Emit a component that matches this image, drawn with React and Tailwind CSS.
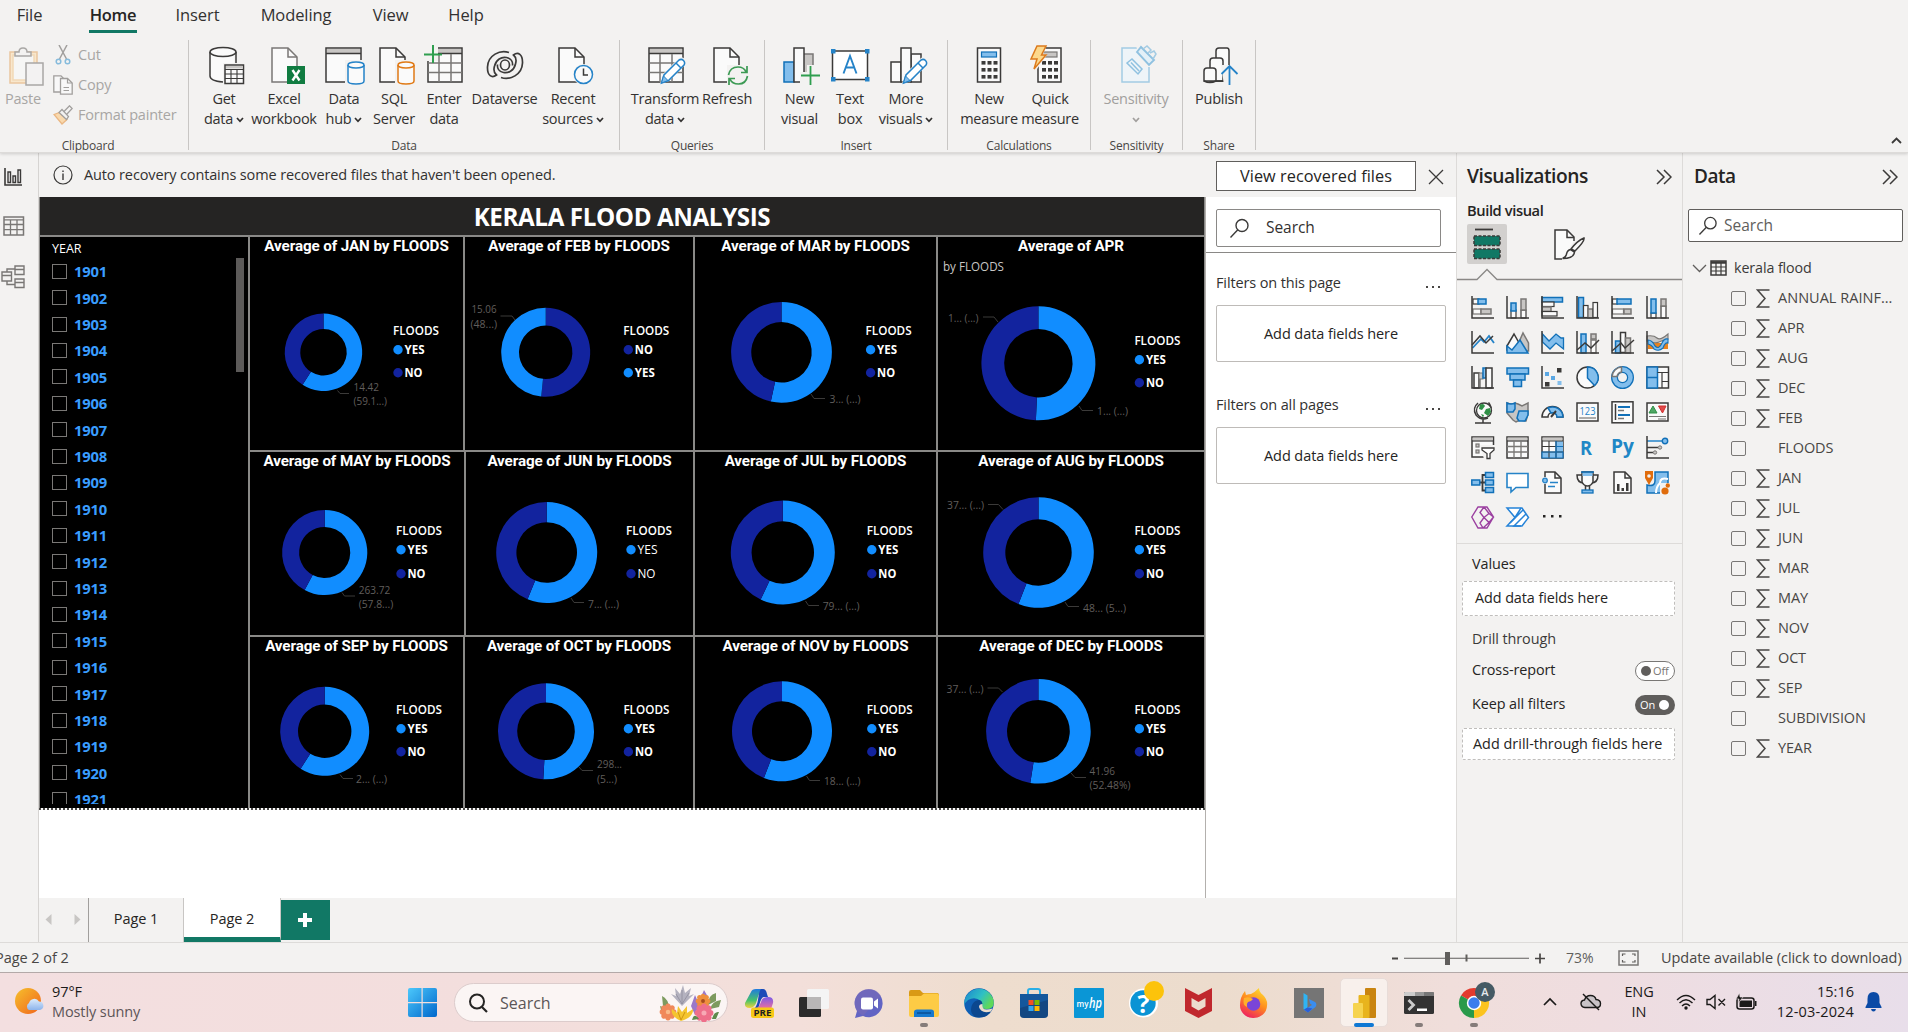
import React from "react";

const INK = "#3b3a39";
const BLUE = "#1170b8";
const SKY = "#83beec";
const GREY = "#c8c6c4";
const MID = "#797775";
const PAPER = "#fafafa";

function Icon({ w, h, className = "", children }) {
  return (
    <svg width={w} height={h} viewBox={`0 0 ${w} ${h}`} fill="none" className={`block shrink-0 ${className}`}>
      {children}
    </svg>
  );
}

function Box({ x, y, w, h, f = "none", s = INK, sw = 1.5, rx }) {
  return <rect x={x} y={y} width={w} height={h} fill={f} stroke={s} strokeWidth={sw} rx={rx} />;
}

function Line({ d, s = INK, f = "none", sw = 1.5, ...rest }) {
  return <path d={d} stroke={s} fill={f} strokeWidth={sw} {...rest} />;
}

/* ---------- ribbon icons ---------- */

const Page = ({ x = 0, s = INK }) => (
  <>
    <Line d={`M${x + 1} 3H${x + 17}L${x + 26} 12V37H${x + 1}Z`} s={s} f={PAPER} />
    <Line d={`M${x + 17} 3V12H${x + 26}`} s={s} />
  </>
);

const Pencil = () => (
  <g>
    <path d="M12 39 15 29 31 13Q34 11 37 14 39 17 37 20L21 36Z" fill="#f3f2f1" />
    <Line d="M13.5 38 16 30 31 15Q33.500 13.500 35.500 15.500 37.500 17.500 36 20L20.500 35.500Z" s="#2583c8" f="#fff" />
    <path d="M13.500 38 15.500 31 20 35.500Z" fill={SKY} stroke="#2583c8" />
    <Line d="M28 18 33 23" s="#2583c8" />
  </g>
);

const Cylinder = ({ s }) => (
  <g>
    <rect x="20" y="15" width="20" height="25" fill="#f3f2f1" />
    <Line d="M23 20V36Q23 39 31 39T39 36V20" s={s} f={PAPER} />
    <ellipse cx="31" cy="20" rx="8" ry="3" fill={PAPER} stroke={s} strokeWidth="1.5" />
  </g>
);

const GridTable = () => (
  <g>
    <Box x={1} y={3} w={34} h={34} f={PAPER} />
    <rect x="2" y="4" width="32" height="4" fill={GREY} />
    <Line d="M1 8.500H35" />
    <Line d="M1 18H35M1 27.500H35M12 9V37M24 9V37" s={MID} />
  </g>
);

const PasteIcon = () => (
  <Icon w={35} h={40} className="opacity-70">
    <Box x={1} y={6} w={27} h={31} f="#fbe3bd" s="#e8b57e" />
    <Box x={4} y={9} w={21} h={25} f="#f8f8f8" s="#f2cf9f" />
    <Line d="M6 10V6H10Q10 2 14 2T18 6H22V10Z" f="#f3f2f1" s="#8a8886" />
    <Box x={17} y={17} w={17} h={22} f="#f3f3f3" s="#8a8886" />
  </Icon>
);
const CutIcon = () => (
  <Icon w={20} h={20}>
    <Line d="M6 0 13.500 14M14 0 6.500 14" s="#a19f9d" />
    <circle cx="5.500" cy="16.500" r="2.300" stroke="#86bbdc" strokeWidth="1.500" />
    <circle cx="14.500" cy="16.500" r="2.300" stroke="#86bbdc" strokeWidth="1.500" />
  </Icon>
);
const CopyIcon = () => (
  <Icon w={20} h={20}>
    <Line d="M7 17H.8V.8H8L12 5" s="#a19f9d" f="#f8f8f8" sw={1.3} />
    <Line d="M7.500 3.500H14.500L19.200 8V19.200H7.500Z" s="#a19f9d" f="#f8f8f8" sw={1.3} />
    <Line d="M14.500 3.500V8H19M10.500 12.500H16M10.500 15.500H16" s="#a19f9d" sw={1.2} />
  </Icon>
);
const PainterIcon = () => (
  <Icon w={20} h={20}>
    <Line d="M1 9.500 6.500 7.500 14 14.500 9 19Z" f="#f9d9ad" s="#eab783" sw={1.3} />
    <Line d="M6 7.500 9 4.500 15.500 11.500 13.500 14.500ZM11 6.500 16.500.8 19.200 3.500 14 9" f="#f3f2f1" s="#a19f9d" sw={1.3} />
  </Icon>
);
const GetDataIcon = () => (
  <Icon w={36} h={40}>
    <Line d="M1 6V32Q1 37 14 37.500V37H25V6" f={PAPER} s="none" />
    <Line d="M14 37Q1 36 1 31V7M27 7V20" />
    <ellipse cx="14" cy="7" rx="13" ry="4.500" fill={PAPER} stroke={INK} strokeWidth="1.500" />
    <rect x="14" y="18" width="22" height="22" fill="#f3f2f1" />
    <Box x={16} y={20} w={18.500} h={18.500} f={PAPER} />
    <rect x="17" y="21" width="17" height="2.500" fill={GREY} />
    <Line d="M16 24.500H34M16 29H34M16 33.500H34M22 24V38M28 24V38" sw={1.1} />
  </Icon>
);
const ExcelIcon = () => (
  <Icon w={34} h={40}>
    <Page s={MID} />
    <rect x="16" y="21" width="18" height="18" fill="#107c41" />
    <Line d="M21.500 25 28.500 35.500M28.500 25 21.500 35.500" s="#fff" sw={2.4} />
  </Icon>
);
const DataHubIcon = () => (
  <Icon w={40} h={40}>
    <Box x={1} y={3} w={35} h={34} f={PAPER} />
    <rect x="2" y="4" width="33" height="4" fill={GREY} />
    <Line d="M1 8.500H36" />
    <Cylinder s="#2583c8" />
  </Icon>
);
const SqlIcon = () => (
  <Icon w={36} h={40}>
    <Page />
    <g transform="translate(-4 0)"><Cylinder s="#e07a16" /></g>
  </Icon>
);
const EnterDataIcon = () => (
  <Icon w={40} h={40}>
    <g transform="translate(3 0)"><GridTable /></g>
    <path d="M0 0H14V16H0Z" fill="#f3f2f1" />
    <Line d="M9 0V18M0 9.500H18" s="#2f9e4f" sw={2} />
  </Icon>
);
const Swirl = () => (
  <path d="M23 2.500C14-.5 2 5 1.500 17 1.200 26 6 28.500 10.500 25 8 23 7.500 19.500 8.500 16 10 9.500 15.500 6.500 20.500 7.500 25 8.500 27 12 26.500 15.500" />
);
const DataverseIcon = () => (
  <Icon w={38} h={30}>
    <g stroke={INK} strokeWidth="1.700">
      <Swirl />
      <g transform="rotate(180 19 15)"><Swirl /></g>
      <ellipse cx="19" cy="15" rx="4.500" ry="5" fill="#f3f2f1" />
    </g>
  </Icon>
);
const RecentIcon = () => (
  <Icon w={36} h={40}>
    <Page />
    <circle cx="25.500" cy="29.500" r="10.500" fill="#f3f2f1" />
    <circle cx="25.500" cy="29.500" r="9" fill={PAPER} stroke="#2583c8" strokeWidth="1.500" />
    <Line d="M25.500 23.500V30H30" />
  </Icon>
);
const TransformIcon = () => <Icon w={38} h={40}><GridTable /><Pencil /></Icon>;
const RefreshIcon = () => (
  <Icon w={36} h={40}>
    <Page />
    <path d="M14 20H36V40H14Z" fill="#f3f2f1" />
    <Line d="M15.500 30Q17 22 25 22 31 22 33 27M34 21V27.500H28M34.500 31Q33 39 25.500 39 19 39 17 34M16 40V33.500H22" s="#3c9a54" sw={1.7} />
  </Icon>
);
const NewVisualIcon = () => (
  <Icon w={38} h={40}>
    <Box x={1} y={17} w={10} h={20} f={SKY} s={BLUE} />
    <Box x={20} y={9} w={10} h={28} f={GREY} s={MID} />
    <Box x={11} y={3} w={10} h={34} f={PAPER} />
    <path d="M17 27H38V40H17ZM24 20H31V40H24Z" fill="#f3f2f1" />
    <Line d="M27.500 21V40M18 30.500H37" s="#2f9e4f" sw={1.800} />
  </Icon>
);
const TextBoxIcon = () => (
  <Icon w={40} h={40}>
    <Box x={2.500} y={6} w={35} h={28.500} f="#fff" />
    {[[1, 4], [35, 4], [1, 32], [35, 32]].map(([x, y]) => <rect key={`${x}-${y}`} x={x} y={y} width="4.500" height="4.500" fill="#2583c8" />)}
    <Line d="M13.500 28.500 20 11 26.500 28.500M16 22.500H24" s="#2583c8" sw={1.900} />
  </Icon>
);
const MoreVisualsIcon = () => (
  <Icon w={38} h={40}>
    <Box x={1} y={17} w={10} h={20} f={PAPER} />
    <Box x={21} y={9} w={10} h={28} f={PAPER} />
    <Box x={11} y={3} w={10} h={34} f={PAPER} />
    <Pencil />
  </Icon>
);
const CalcBody = ({ x, screen, edge }) => (
  <g>
    <Box x={x} y={3} w={23} h={34} f={PAPER} />
    <Box x={x + 4} y={7} w={15} h={5} f={screen} s={edge} sw={1.2} />
    {[16, 23, 30].map((y) => [4, 10, 16].map((c) => <rect key={`${y}-${c}`} x={x + c} y={y} width="4" height="3.600" fill={INK} />))}
  </g>
);
const NewMeasureIcon = () => <Icon w={26} h={40}><CalcBody x={1.500} screen={SKY} edge={BLUE} /></Icon>;
const QuickMeasureIcon = () => (
  <Icon w={36} h={40}>
    <CalcBody x={9} screen={GREY} edge={MID} />
    <path d="M0 0H18L14 9 18 10 8 24 0 26Z" fill="#f3f2f1" />
    <Line d="M8 1H17L12.500 10H17L5 24 8 14H2Z" f="#fcd88c" s="#dc7a1c" />
  </Icon>
);
const SensitivityIcon = () => (
  <Icon w={36} h={40}>
    <Box x={1} y={3} w={27} h={34} f="#eef4f8" s="#a3cbe3" />
    <path d="M15 0H36V22H20Z" fill="#f3f2f1" />
    <Line d="M6 18 11 14 21 24 17 29ZM10 17.500 18 26" s="#8fc1e0" />
    <Line d="M16 7 20 2 33 15 28 20Z" s="#8fc1e0" f="#e3f0f8" sw={1.900} />
    <Line d="M22 4 26 1 30 5 27 8M29 8 33 6 35 9 32 14" s="#a3cbe3" />
  </Icon>
);
const PublishIcon = () => (
  <Icon w={36} h={40}>
    <Line d="M13 36V6Q13 3 16 3H24Q26 3 26 6V36Z" f={PAPER} />
    <Line d="M7 36V16Q7 13 10 13H17Q20 13 20 16V36Z" f={PAPER} />
    <Line d="M1 36V26Q1 23 4 23H10Q13 23 13 26V36Z" f={PAPER} />
    <Line d="M1 36Q7 39 13 36H23" />
    <path d="M18 20H34V40H21Z" fill="#f3f2f1" />
    <Line d="M26.500 40V21M18.500 29 26.500 21 34.500 29" s="#2583c8" sw={1.800} />
  </Icon>
);

const Chevron = ({ className = "" }) => (
  <Icon w={8} h={6} className={className}>
    <path d="M1 1 4 4.300 7 1" stroke="currentColor" strokeWidth="1.700" />
  </Icon>
);

const ribbon = [
  {
    label: "Data", width: "w-[431px]", pad: "pl-[5px]",
    items: [
      { icon: GetDataIcon, w: "w-[60px]", a: "Get", b: "data", drop: true, dx: "ml-[6px]" },
      { icon: ExcelIcon, w: "w-[60px]", a: "Excel", b: "workbook", dx: "ml-[7px]" },
      { icon: DataHubIcon, w: "w-[60px]", a: "Data", b: "hub", drop: true, dx: "ml-[2px]" },
      { icon: SqlIcon, w: "w-[40px]", a: "SQL", b: "Server", dx: "ml-[6px]" },
      { icon: EnterDataIcon, w: "w-[60px]", a: "Enter", b: "data", dx: "mr-[1px]" },
      { icon: DataverseIcon, w: "w-[61px]", a: "Dataverse", dx: "" },
      { icon: RecentIcon, w: "w-[76px]", a: "Recent", b: "sources", drop: true, dx: "ml-[6px]" },
    ],
  },
  {
    label: "Queries", width: "w-[145px]", pad: "pl-[12px]",
    items: [
      { icon: TransformIcon, w: "w-[66px]", a: "Transform", b: "data", drop: true, dx: "ml-[3px]" },
      { icon: RefreshIcon, w: "w-[58px]", a: "Refresh", dx: "ml-[8px]" },
    ],
  },
  {
    label: "Insert", width: "w-[183px]", pad: "pl-[10px]",
    items: [
      { icon: NewVisualIcon, w: "w-[49px]", a: "New", b: "visual", dx: "ml-[4px]" },
      { icon: TextBoxIcon, w: "w-[52px]", a: "Text", b: "box", dx: "" },
      { icon: MoreVisualsIcon, w: "w-[60px]", a: "More", b: "visuals", drop: true, dx: "ml-[5px]" },
    ],
  },
  {
    label: "Calculations", width: "w-[143px]", pad: "pl-[9px]",
    items: [
      { icon: NewMeasureIcon, w: "w-[64px]", a: "New", b: "measure", dx: "" },
      { icon: QuickMeasureIcon, w: "w-[58px]", a: "Quick", b: "measure", dx: "mr-[6px]" },
    ],
  },
  {
    label: "Sensitivity", width: "w-[92px]", pad: "pl-[10px]",
    items: [{ icon: SensitivityIcon, w: "w-[70px]", a: "Sensitivity", b: "", drop: true, off: true, dx: "ml-[6px]" }],
  },
  {
    label: "Share", width: "w-[73px]", pad: "pl-[1px]",
    items: [{ icon: PublishIcon, w: "w-[70px]", a: "Publish", dx: "ml-[4px]" }],
  },
];

const tabs = [
  ["File", "ml-[16px] w-[27px]"],
  ["Home", "ml-[46px] w-[48px]"],
  ["Insert", "ml-[39px] w-[43px]"],
  ["Modeling", "ml-[41px] w-[72px]"],
  ["View", "ml-[40px] w-[37px]"],
  ["Help", "ml-[39px] w-[36px]"],
];

function Ribbon() {
  return (
    <header className="flex h-[153px] flex-col border-b border-[#dddbd9] bg-[#f3f2f1] shadow-[0_1px_3px_rgba(0,0,0,0.16)]">
      <nav className="flex h-[33px] shrink-0">
        {tabs.map(([name, cls]) => (
          <span
            key={name}
            className={`flex h-[33px] items-center justify-center whitespace-nowrap text-[16.5px] ${cls} ${
              name === "Home" ? "border-b-[3px] border-[#117865] font-semibold tracking-[-0.3px] text-[#252423]" : "pb-[3px] tracking-[-0.1px] text-[#323130]"
            }`}
          >
            {name}
          </span>
        ))}
      </nav>
      <div className="flex pt-[7px]">
        <section className="flex h-[110px] w-[189px] flex-col border-r border-[#c8c6c4] text-[14.5px] tracking-[-0.2px] text-[#a8a6a4]">
          <div className="flex h-[97px] shrink-0">
            <div className="flex w-[46px] flex-col items-center pt-[6px]">
              <div className="ml-[6px]"><PasteIcon /></div>
              <span className="mt-[3px] leading-[20px]">Paste</span>
            </div>
            <div className="flex flex-col pl-[7px]">
              <div className="flex h-[30px] items-center gap-[5px]"><CutIcon />Cut</div>
              <div className="flex h-[30px] items-center gap-[5px]"><CopyIcon />Copy</div>
              <div className="flex h-[30px] items-center gap-[5px] whitespace-nowrap"><PainterIcon />Format painter</div>
            </div>
          </div>
          <span className="w-[176px] text-center text-[12px] leading-[17px] text-[#484644]">Clipboard</span>
        </section>
        {ribbon.map((g) => (
          <section key={g.label} className={`flex h-[110px] flex-col border-r border-[#c8c6c4] ${g.width}`}>
            <div className={`flex h-[97px] shrink-0 ${g.pad}`}>
              {g.items.map((it) => (
                <div
                  key={it.a}
                  className={`flex shrink-0 flex-col items-center text-[14.5px] leading-[20px] tracking-[-0.25px] ${it.w} ${it.off ? "text-[#a19f9d]" : "text-[#323130]"}`}
                >
                  <div className={`flex h-[44px] items-center pt-[5px] ${it.dx}`}><it.icon /></div>
                  <span className="mt-[5px] whitespace-nowrap">{it.a}</span>
                  <span className="flex h-[20px] items-center whitespace-nowrap">
                    {it.b}
                    {it.drop && <Chevron className={it.b ? "mt-[2px] ml-[3px]" : "mt-[2px]"} />}
                  </span>
                </div>
              ))}
            </div>
            <span className="text-center text-[12px] leading-[17px] tracking-[-0.2px] text-[#484644]">{g.label}</span>
          </section>
        ))}
        <div className="flex flex-1 items-end justify-end pr-[6px] pb-[6px]">
          <Icon w={11} h={7}><Line d="M1 6 5.500 1.500 10 6" sw={1.800} /></Icon>
        </div>
      </div>
    </header>
  );
}

/* ---------- left rail ---------- */

function Rail() {
  return (
    <aside className="flex w-[39px] shrink-0 flex-col border-r border-[#d6d4d2] pt-[15px]">
      <Icon w={18} h={18} className="ml-[4px]">
        <Line d="M1 0V17H18" sw={1.600} />
        <Line d="M4 14.500V4H6.500V14.500ZM9 14.500V8H11.500V14.500ZM14 14.500V2H16.500V14.500Z" sw={1.400} />
      </Icon>
      <Icon w={22} h={21} className="mt-[30px] ml-[3px]">
        <Box x={1} y={1} w={19.500} h={18} s={MID} />
        <Line d="M1 3.800H20M1 8.500H20M1 13.700H20M7.500 4V19M14 4V19" s={MID} sw={1.300} />
      </Icon>
      <Icon w={24} h={24} className="mt-[28px] ml-[1px]">
        <Line d="M1 7H10.500V16H1ZM1 10.500H10.500M14 1H23V9.500H14ZM14 4.500H23M14 14H23V22.500H14ZM14 17.500H23M6 7V4H14M6 16V19.500H14" s={MID} sw={1.400} />
      </Icon>
    </aside>
  );
}

/* ---------- report canvas ---------- */

const YES = "#118dff";
const NO = "#12239e";

const charts = [
  [
    { m: "JAN", vb: [250, 237, 213, 213], w: "w-[215px]", cx: 323.5, cy: 352.3, r: 38.7, p: 0.591, lx: 393, ly: 330.7, gap: [19, 42],
      labels: [[353.5, 390.500, "14.42", 25.5], [353.5, 404.500, "(59.1...)", 33.500]], leads: ["M337.500 390.500 340 393.500H349"] },
    { m: "FEB", vb: [465, 237, 229, 213], w: "w-[230px]", cx: 545.7, cy: 352.3, r: 44.5, p: 0.516, swap: true, lx: 623.3, ly: 330.7, gap: [19, 42],
      labels: [[471.500, 313, "15.06", 25], [470.500, 328, "(48...)", 26.500]], leads: ["M500.500 316H512L515 320"] },
    { m: "MAR", vb: [695, 237, 241, 213], w: "w-[243px]", cx: 781.5, cy: 352.3, r: 50.4, p: 0.534, lx: 865.6, ly: 330.7, gap: [19, 42],
      labels: [[829.500, 403, "3... (...)", 31]], leads: ["M811 394 814 398.500H825"] },
    { m: "APR", vb: [938, 237, 266, 213], w: "flex-1", cx: 1038.4, cy: 363.3, r: 57, p: 0.507, lx: 1134.4, ly: 340.7, gap: [19, 42],
      labels: [[948, 322, "1... (...)", 30.500], [1097, 415, "1... (...)", 31]], leads: ["M983 317H994L998 322", "M1079 406 1082 410.500H1093"] },
  ],
  [
    { m: "MAY", vb: [250, 452, 214, 183], w: "w-[216px]", cx: 324.7, cy: 552.5, r: 42.6, p: 0.578, lx: 396, ly: 530.7, gap: [19, 43],
      labels: [[358.700, 594, "263.72", 31.500], [358.700, 608, "(57.8...)", 34.500]], leads: ["M342 592.500 344.500 596H355"] },
    { m: "JUN", vb: [466, 452, 227, 183], w: "w-[229px]", cx: 546.7, cy: 552.5, r: 50.5, p: 0.562, thin: true, lx: 626, ly: 530.7, gap: [19, 43],
      labels: [[588, 607.500, "7... (...)", 31]], leads: ["M571 598 574 602.500H584"] },
    { m: "JUL", vb: [695, 452, 241, 183], w: "w-[243px]", cx: 782.8, cy: 552.5, r: 52, p: 0.57, lx: 866.8, ly: 530.7, gap: [19, 43],
      labels: [[822.700, 610, "79... (...)", 37]], leads: ["M805.500 601 808.500 605.500H819"] },
    { m: "AUG", vb: [938, 452, 266, 183], w: "flex-1", cx: 1038.5, cy: 552.5, r: 55.3, p: 0.559, lx: 1134.400, ly: 530.7, gap: [19, 43],
      labels: [[947, 509, "37... (...)", 37], [1083, 612, "48... (5...)", 43]], leads: ["M988 504.500H998.500L1003 509.500", "M1065 602 1068 606.500H1079"] },
  ],
  [
    { m: "SEP", vb: [250, 637, 214, 169], w: "w-[215px]", cx: 324.7, cy: 731.3, r: 44.5, p: 0.591, lx: 396, ly: 709.7, gap: [19, 42],
      labels: [[356, 783, "2... (...)", 31]], leads: ["M340 774.500 343 778.500H353"] },
    { m: "OCT", vb: [465, 637, 229, 169], w: "w-[230px]", cx: 546, cy: 731.3, r: 48, p: 0.509, lx: 623.4, ly: 709.7, gap: [19, 42],
      labels: [[597, 768, "298...", 25], [597, 783, "(5...)", 20]], leads: ["M579 767 582 770.500H593"] },
    { m: "NOV", vb: [695, 637, 241, 169], w: "w-[243px]", cx: 782, cy: 731.3, r: 50, p: 0.559, lx: 866.8, ly: 709.7, gap: [19, 42],
      labels: [[824, 785, "18... (...)", 36.500]], leads: ["M806.500 776 809.500 780.500H820"] },
    { m: "DEC", vb: [938, 637, 266, 169], w: "flex-1", cx: 1038.4, cy: 731.3, r: 52.3, p: 0.5248, lx: 1134.400, ly: 709.7, gap: [19, 42],
      labels: [[946.500, 693, "37... (...)", 37], [1089.500, 775, "41.96", 25.500], [1089.500, 789, "(52.48%)", 41]], leads: ["M987.500 688H998.500L1002.500 692", "M1071 773 1075 777.500H1086"] },
  ],
];

function Donut({ cx, cy, r, p, first, second }) {
  const hole = r * 0.6;
  const a = p * Math.PI * 2;
  const pt = (rad, ang) => `${cx + rad * Math.sin(ang)} ${cy - rad * Math.cos(ang)}`;
  const arc = (a0, a1) => {
    const big = a1 - a0 > Math.PI ? 1 : 0;
    return `M${pt(r, a0)}A${r} ${r} 0 ${big} 1 ${pt(r, a1)}L${pt(hole, a1)}A${hole} ${hole} 0 ${big} 0 ${pt(hole, a0)}Z`;
  };
  return (
    <>
      <path d={arc(0, a)} fill={first} />
      <path d={arc(a, Math.PI * 2)} fill={second} />
    </>
  );
}

function ChartCard({ c, last }) {
  const first = c.swap ? ["NO", NO] : ["YES", YES];
  const second = c.swap ? ["YES", YES] : ["NO", NO];
  const [x, y, w, h] = c.vb;
  const top = 18;
  return (
    <article className={`flex flex-col overflow-hidden ${c.w} ${last ? "" : "border-r-2 border-[#8a8987]"}`}>
      <h2 className={`h-[18px] whitespace-nowrap text-center font-[Roboto] text-[15.200px] leading-[19px] font-bold text-white ${c.m === "APR" ? "tracking-[-0.100px]" : "tracking-[-0.100px]"}`}>
        Average of {c.m}{c.m === "APR" ? "" : " by FLOODS"}
      </h2>
      <svg width={w} height={h - top} viewBox={`${x} ${y + top} ${w} ${h - top}`} className="block font-['Open_Sans',sans-serif]">
        {c.m === "APR" && <text x="943" y="271" fontSize="12.500" fill="#c8c6c4" textLength="61" lengthAdjust="spacingAndGlyphs">by FLOODS</text>}
        <Donut cx={c.cx} cy={c.cy} r={c.r} p={c.p} first={first[1]} second={second[1]} />
        {c.leads.map((d) => <path key={d} d={d} fill="none" stroke="#3b3a39" />)}
        {c.labels.map(([lx, ly, t, len]) => (
          <text key={`${lx}${ly}`} x={lx} y={ly} fontSize="11.500" fill="#605e5c" textLength={len} lengthAdjust="spacingAndGlyphs">{t}</text>
        ))}
        <text x={c.lx} y={c.ly + 4.300} fontSize="12" fontWeight="600" fill="#fff" textLength="46" lengthAdjust="spacingAndGlyphs">FLOODS</text>
        {[first, second].map(([name, col], i) => (
          <g key={name}>
            <circle cx={c.lx + 5} cy={c.ly + c.gap[i]} r="4.700" fill={col} />
            <text x={c.lx + 11.500} y={c.ly + c.gap[i] + 4.600} fontSize="12" fontWeight={c.thin ? 400 : 700} fill="#fff" textLength={name === "YES" ? 20 : 18} lengthAdjust="spacingAndGlyphs">{name}</text>
          </g>
        ))}
      </svg>
    </article>
  );
}

const years = Array.from({ length: 21 }, (_, i) => 1901 + i);

function Slicer() {
  return (
    <div className="flex w-[210px] flex-col border-r-2 border-[#8a8987] pl-[12px]">
      <span className="mt-[3px] text-[12.500px] leading-[17px] font-medium text-white">YEAR</span>
      <div className="flex h-[547px]">
        <ul className="flex h-[547px] flex-1 flex-col overflow-hidden pt-[1px]">
          {years.map((yr) => (
            <li key={yr} className="flex h-[26.420px] shrink-0 items-center">
              <span className="size-[15px] border border-[#7a7876]" />
              <span className="ml-[7px] text-[14.800px] font-bold tracking-[-0.200px] text-[#3a9dff]">{yr}</span>
            </li>
          ))}
        </ul>
        <div className="mt-[1px] mr-[4px] h-[114px] w-[8px] bg-[#5c5a59]" />
      </div>
    </div>
  );
}

function Report() {
  return (
    <div className="flex min-h-0 flex-1 flex-col bg-white">
      <div className="flex h-[611px] shrink-0 flex-col border-r border-l border-[#8a8987] bg-black">
        <h1 className="flex h-[38px] shrink-0 items-center justify-center bg-[#252423] pt-[3px] text-[24.200px] font-bold tracking-[-0.400px] text-white">
          KERALA FLOOD ANALYSIS
        </h1>
        <div className="flex min-h-0 flex-1 border-t-2 border-[#8a8987]">
          <Slicer />
          <div className="flex flex-1 flex-col">
            {charts.map((row, i) => (
              <div key={row[0].m} className={["flex h-[215px] border-b-2 border-[#8a8987]", "flex h-[185px] border-b-2 border-[#8a8987]", "flex flex-1"][i]}>
                {row.map((c, j) => <ChartCard key={c.m} c={c} last={j === 3} />)}
              </div>
            ))}
          </div>
        </div>
      </div>
      <div className="h-[2px] bg-[repeating-linear-gradient(90deg,#4b4a48_0_2px,#fff_2px_4px)]" />
    </div>
  );
}

/* ---------- panes ---------- */

const SearchGlyph = ({ size = 21 }) => (
  <svg width={size} height={size} viewBox="0 0 21 21" fill="none" className="block shrink-0">
    <circle cx="13" cy="7.500" r="6" stroke={INK} strokeWidth="1.400" />
    <path d="M8.800 11.800 1.500 19.500" stroke={INK} strokeWidth="1.400" />
  </svg>
);

const DoubleChevron = () => (
  <Icon w={16} h={16}><Line d="M1 1 8 8 1 15M8 1 15 8 8 15" sw={1.500} /></Icon>
);

function FilterGroup({ title }) {
  return (
    <section>
      <div className="flex h-[20px] w-[225px] items-center justify-between whitespace-nowrap text-[14.500px] tracking-[-0.130px] text-[#323130]">
        {title}
        <Icon w={16} h={4} className="mt-[7px]"><path d="M1 1h2v2H1zM7 1h2v2H7zM13 1h2v2h-2z" fill="#484644" /></Icon>
      </div>
      <div className="mt-[12px] flex h-[57px] w-[230px] items-center justify-center rounded-[2px] border border-[#bebbb8] text-[14.500px] tracking-[-0.080px] text-[#252423]">
        Add data fields here
      </div>
    </section>
  );
}

function Filters() {
  return (
    <aside className="flex w-[251px] shrink-0 flex-col border-l border-[#b3b0ad] bg-white">
      <div className="flex h-[56px] items-end border-b border-[#8a8886] pb-[5px] pl-[10px]">
        <div className="flex h-[38px] w-[225px] items-center gap-[16px] rounded-[2px] border border-[#8a8886] pl-[12px] text-[15.500px] tracking-[-0.050px] text-[#323130]">
          <SearchGlyph />Search
        </div>
      </div>
      <div className="flex flex-col gap-[33px] pt-[20px] pl-[10px]">
        <FilterGroup title="Filters on this page" />
        <FilterGroup title="Filters on all pages" />
      </div>
    </aside>
  );
}

const Axes = () => <Line d="M1 0V22H23" />;
const Sheet = () => <Box x={1} y={2} w={21} h={18} f={PAPER} />;

const vizIcons = [
  <><Box x={2} y={3} w={6} h={5} f={PAPER} sw={1.2} /><Box x={7} y={3} w={8} h={5} f={SKY} s={BLUE} /><Box x={2} y={13} w={8} h={5} f={PAPER} s={MID} sw={1.2} /><Box x={10} y={13} w={10} h={5} f={GREY} s={MID} /><Axes /></>,
  <><Box x={5} y={14} w={5} h={8} f={PAPER} sw={1.2} /><Box x={5} y={7} w={5} h={8} f={SKY} s={BLUE} /><Box x={15} y={14} w={5} h={8} f={PAPER} sw={1.2} /><Box x={15} y={3} w={5} h={11} f={GREY} s={MID} /><Axes /></>,
  <><Box x={1} y={1.5} w={20.500} h={4.500} f={SKY} s={BLUE} /><Box x={1} y={6} w={12} h={4.500} f={PAPER} sw={1.2} /><Box x={1} y={11} w={9} h={4.500} f={GREY} s={MID} /><Box x={1} y={15.500} w={15} h={4.500} f={PAPER} sw={1.2} /><Axes /></>,
  <><Box x={2.500} y={1.500} w={5} h={20} f={SKY} s={BLUE} /><Box x={7.500} y={9.500} w={4.500} h={12} f={PAPER} sw={1.2} /><Box x={12} y={13} w={5} h={9} f={GREY} s={MID} /><Box x={17} y={6.500} w={4.500} h={15} f={PAPER} sw={1.2} /><Axes /></>,
  <><Box x={1.500} y={3} w={5} h={5} f={PAPER} sw={1.2} /><Box x={6} y={3} w={14} h={5} f={SKY} s={BLUE} /><Box x={1.500} y={13} w={11} h={5} f={PAPER} s={MID} sw={1.2} /><Box x={13} y={13} w={7} h={5} f={GREY} s={MID} /><Axes /></>,
  <><Box x={5} y={17} w={5} h={5} f={PAPER} sw={1.2} /><Box x={5} y={3} w={5} h={14} f={SKY} s={BLUE} /><Box x={15} y={10} w={5} h={12} f={PAPER} sw={1.2} /><Box x={15} y={3} w={5} h={7} f={GREY} s={MID} /><Axes /></>,
  <><Line d="M1.500 17 10 8 13 11 18 5 23 12" s="#2583c8" sw={1.800} /><Line d="M1 14 9 5 15 12 22 5" /><Axes /></>,
  <><Line d="M9 20 17 2 22.500 12V20Z" s={MID} f={GREY} /><Line d="M1 15 8 3 17 19H1Z" f={PAPER} /><Line d="M1 22V15L6 19 14 9 22 22Z" s={BLUE} f={SKY} /></>,
  <><Line d="M1.500 3 8 10 15 3 20 7H22.500V18L15 12 9 18 1.500 11Z" s={BLUE} f={SKY} sw={1.300} /><Axes /></>,
  <><Box x={5} y={3} w={5} h={19} f={SKY} s={BLUE} /><Box x={15} y={3} w={5} h={5} f={GREY} s={MID} /><Box x={15} y={9} w={5} h={13} f={PAPER} s={MID} /><Line d="M1 19 9 12 15 17 23 9" /><Axes /></>,
  <><Box x={4.500} y={10} w={5} h={12} f={SKY} s={BLUE} /><Box x={9.500} y={1.500} w={5} h={20} f={PAPER} /><Box x={14.500} y={7} w={5} h={15} f={GREY} s={MID} /><Line d="M1 20 10 12 14 17 23 9" /><Axes /></>,
  <><path d="M2 12H22V18H2Z" fill="#e8821e" /><Line d="M1 5Q8 4 11 7T22 3V8Q17 9 13 11T1 10Z" f={GREY} s={MID} sw={1.100} /><Line d="M2 9Q6 9 9 15 13 19 16 12 18 7 22 8V12Q19 11 17 17 13 21 8 18 6 14 2 13Z" s={BLUE} f={SKY} sw={1.100} /><Axes /></>,
  <><Box x={3} y={7} w={5} h={15} f={PAPER} /><Box x={8} y={7} w={4} h={6} f={GREY} s={MID} sw={1} /><Box x={12} y={2} w={3} h={10} f={SKY} s={BLUE} /><Box x={15} y={2} w={6} h={20} f={PAPER} /><Line d="M9 13V22" s={MID} /><Axes /></>,
  <><Box x={1} y={2} w={21.500} h={6} f={SKY} s={BLUE} /><Box x={4} y={8} w={15} h={6} f={SKY} s={BLUE} /><Box x={7.500} y={14} w={8} h={6.500} f={SKY} s={BLUE} /></>,
  <><rect x="16" y="2" width="4.500" height="4.500" fill={INK} /><rect x="4" y="6" width="4" height="4" fill="#5aa7e3" /><rect x="10" y="10" width="4" height="4" fill="#5aa7e3" /><rect x="16.500" y="15" width="4" height="4" fill={SKY} /><rect x="4" y="16" width="4.500" height="4.500" fill={INK} /><Axes /></>,
  <><circle cx="11.500" cy="11.500" r="10.500" fill={PAPER} stroke={INK} strokeWidth="1.500" /><Line d="M11.500 1A10.500 10.500 0 0 1 18.500 19.500L11.500 12Z" s={BLUE} f={SKY} /></>,
  <><circle cx="11.500" cy="11.500" r="8" fill="none" stroke={BLUE} strokeWidth="7" /><circle cx="11.500" cy="11.500" r="8" fill="none" stroke={SKY} strokeWidth="4.500" /><Line d="M1 10.500A10.500 10.500 0 0 1 10.500 1V6A5.500 5.500 0 0 0 6 10.500Z" f={PAPER} s={MID} /></>,
  <><Box x={1} y={1} w={21.500} h={21} f={PAPER} /><Box x={1} y={1} w={10.500} h={21} f={SKY} s={BLUE} /><Line d="M1 11.500H11" s={BLUE} /><Line d="M11.500 6.500H22.500M16 6.500V22M16 15.500H22.500" sw={1.200} /></>,
  <><Line d="M7 2Q1 7 5 14 10 20 17 17M17.500 1.500Q21 6 20 10M12 18V22M4 22H20" /><circle cx="13" cy="9.500" r="7.500" fill={PAPER} stroke={INK} strokeWidth="1.300" /><path d="M9 3.500Q13 2 14 5L11 9 8 8ZM15 8 19 7 20 11 17 15 13 12ZM10 13 13 14 12 16.500Z" fill="#2f8f46" /></>,
  <><Line d="M1 2Q6 4 9 2L12 3 16 5 22 2V13L20 20 14 19 10 21 7 19 1 12Z" s={MID} f={GREY} /><Line d="M1 2Q5 4 9 2V8L7 11H1ZM13 10H22V14L19 20H13L11 17Z" s={BLUE} f={SKY} /></>,
  <><Line d="M1 16A10.500 10.500 0 0 1 22 16H16A4.500 4.500 0 0 0 7 16Z" f={PAPER} /><Line d="M7 7A10.500 10.500 0 0 1 22 16H16A4.500 4.500 0 0 0 10 12Z" s={BLUE} f={SKY} /><Line d="M10 16 15 10" sw={2} /></>,
  <><Sheet /><text x="3.500" y="13.500" fontSize="11" fill="#2583c8" textLength="16" lengthAdjust="spacingAndGlyphs">123</text><Line d="M3 17H20" s={MID} sw={1.200} /></>,
  <><Box x={1} y={.8} w={21} h={21} f={PAPER} /><Line d="M4.500 3V19" /><Line d="M7 6H19M7 14H19" s={BLUE} sw={2} /><Line d="M7 9.500H13M7 17.500H13" s={MID} sw={1.500} /></>,
  <><Sheet /><path d="M3 12 7 5 11 12Z" fill="#4fa765" stroke="#2f8f46" /><path d="M12.500 5H20L16.500 12Z" fill="#e04a4a" stroke="#d22f2f" /><Line d="M3 15.500H20M12 18H20" s={MID} sw={1.200} /></>,
  <><Box x={1} y={1} w={21.500} h={20} f={PAPER} /><rect x="1.500" y="1.500" width="20.500" height="3" fill={GREY} /><Line d="M1 5H22.500" sw={1.200} /><Box x={5} y={8} w={3} h={3} f={GREY} s={MID} sw={1.2} /><Box x={5} y={14} w={3} h={3} f={GREY} s={MID} sw={1.2} /><path d="M9 9H24V23H13Z" fill="#f3f2f1" /><Line d="M11 12H23V14L19 17.500V22.500H16V17.500L11 14Z" f="#fff" sw={1.300} /></>,
  <><Box x={1} y={1} w={21} h={21} f={PAPER} /><rect x="1.500" y="1.500" width="20" height="3" fill={GREY} /><Line d="M1 5H22" sw={1.200} /><Line d="M1 10.500H22M1 16H22M8 5V22M15 5V22" s={MID} sw={1.300} /></>,
  <><Box x={1} y={1} w={21} h={21} f={PAPER} /><rect x="1.500" y="1.500" width="20" height="3" fill={GREY} /><path d="M15 5H22V22H1V16H15Z" fill={SKY} /><Line d="M1 5H22M1 10.500H22M1 16H22M8 5V22M15 5V22" sw={1.100} /><Line d="M1 16H22V22H1ZM15 5V22M15 10.500H22" s={BLUE} sw={1.200} /></>,
  <text x="4" y="19" fontSize="20" fontWeight="700" fill="#1f87c6" textLength="12" lengthAdjust="spacingAndGlyphs">R</text>,
  <text x="0" y="17" fontSize="20" fontWeight="700" fill="#1f87c6" textLength="23" lengthAdjust="spacingAndGlyphs">Py</text>,
  <><Line d="M1 5H16" s="#2583c8" /><circle cx="19" cy="5" r="2.700" fill={SKY} stroke={BLUE} strokeWidth="1.400" /><Line d="M1 11.500H12M1 16.500H7" sw={1.300} /><circle cx="14" cy="11.500" r="1.700" fill={GREY} stroke={MID} /><circle cx="9" cy="16.500" r="1.700" fill={GREY} stroke={MID} /><Axes /></>,
  <><Line d="M8 11.500H15M15 4H11.500V19.500H15" sw={1.800} /><Box x={.8} y={9} w={8} h={5} f={SKY} s={BLUE} /><Box x={14.500} y={1.500} w={8} h={5} f={SKY} s={BLUE} /><Box x={14.500} y={9} w={8} h={5} f={SKY} s={BLUE} /><Box x={14.500} y={16.500} w={8} h={5} f={SKY} s={BLUE} /></>,
  <Line d="M1 2.500H22V16.500H10L5 21V16.500H1Z" s="#2583c8" f="#fff" sw={1.600} />,
  <><Line d="M4 1H14L20 7V22H4Z" f={PAPER} /><Line d="M14 1V7H20" /><rect x="2" y="6" width="4" height="7" fill="#f3f2f1" /><circle cx="4" cy="9.500" r="2.300" fill={SKY} stroke="#2583c8" strokeWidth="1.300" /><Line d="M9 11.500H17M7 15.500H14" s="#2583c8" sw={1.300} /></>,
  <><Line d="M6 4H1Q1 12 8 12M17 4H22Q22 12 15 12M9.500 15V19M13.500 15V19" f="none" /><Line d="M6 1H17V11Q15 15 11.500 15T6 11Z" f={PAPER} /><path d="M6.500 1.500H16.500V5H6.500Z" fill={SKY} /><Line d="M6 2V1H17V2" s={BLUE} /><Box x={6} y={19} w={11} h={3} f={SKY} s={BLUE} sw={1.3} /></>,
  <><Line d="M3 1H14L20 7V22H3Z" f={PAPER} /><Line d="M14 1V7H20" /><path d="M6 13H8.500V20H6ZM10.500 17H13V20H10.500ZM15 12H17.500V20H15Z" fill={INK} /></>,
  <><Line d="M9 1H22V12L14 22H1V14Q9 16 9 10Z" s={BLUE} f={SKY} /><Line d="M22 8Q14 6 14 12 10 16 10 22" s="#fff" sw={2} /><path d="M-1 0H7V7L3 14-1 7Z" fill="#e06c0c" /><circle cx="3" cy="5" r="1.800" fill="#f3f2f1" /><path d="M14 12H24V23H14Z" fill="#f3f2f1" /><circle cx="19" cy="20" r="3.600" fill="#e06c0c" /><circle cx="21.800" cy="14.500" r="2.200" fill="#e06c0c" /></>,
  <g stroke="#9b3fa0" strokeWidth="1.400"><path d="M13 1H7L.8 11 7 22H12L9 17 13 11.500 9 6.500ZM13 1H16L22.500 11 16 22H12M13 1 18 7.500 13 11.500 18 16.500 12 22M18 7.500 22.500 11 18 16.500" /></g>,
  <g stroke="#2583d8" strokeWidth="1.500" fill="#fff"><path d="M1 2H16L22.500 11.500 16 20H1L9 11.500Z" /><path d="M9 11.500 15 2M15 20H8L20 8M4 17 17 4" fill="none" /></g>,
  <path d="M2 9h2.500v2.500H2zM10 9h2.500v2.500H10zM18 9h2.500v2.500H18z" fill="#252423" />,
];

function Visualizations() {
  return (
    <aside className="flex w-[226px] shrink-0 flex-col border-l border-[#dddbd9] bg-[#f3f2f1] text-[#252423]">
      <div className="flex h-[47px] items-center justify-between pr-[10px] pl-[10px] text-[19.200px] font-semibold tracking-[-0.450px]">
        Visualizations<DoubleChevron />
      </div>
      <h3 className="pl-[10px] text-[14.700px] leading-[20px] font-semibold tracking-[-0.400px]">Build visual</h3>
      <div className="flex h-[46px] pt-[4px] pl-[10px]">
        <div className="flex h-[40px] w-[40px] items-center justify-center rounded-[2px] bg-[#d2d0ce]">
          <Icon w={32} h={32}>
            <Line d="M4 1.500H22" sw={1.800} />
            <rect x="3" y="8" width="26" height="9.500" fill="#117865" stroke={INK} strokeWidth="1.500" strokeDasharray="3 1.500" />
            <rect x="3" y="21" width="26" height="9.500" fill="#117865" stroke={INK} strokeWidth="1.500" strokeDasharray="3 1.500" />
          </Icon>
        </div>
        <Icon w={32} h={32} className="mt-[5px] ml-[47px]">
          <Line d="M8 30H1V1H13L20 8V12" f={PAPER} />
          <Line d="M13 1V8.500H20" />
          <Line d="M30 9Q31 12 21 22L17 20Q23 12 30 9ZM16.500 20.500 20.500 23Q20 29.500 8.500 29.500 12 28.500 12.500 25 13.500 21 16.500 20.500Z" f="#f8f8f8" />
        </Icon>
      </div>
      <Icon w={225} h={16}><Line d="M0 13.500H20L30 3.500 40 13.500H225" s="#8a8886" sw={1.300} /></Icon>
      <div className="grid h-[262px] grid-cols-[repeat(6,35px)] content-start gap-y-[12px] border-b border-[#dddbd9] pt-[14px] pl-[14px]">
        {vizIcons.map((g, i) => <svg key={i} width="23" height="23" viewBox="0 0 23 23" fill="none" className="block overflow-visible">{g}</svg>)}
      </div>
      <div className="flex flex-col pr-[7px] pl-[5px] text-[14.400px] tracking-[-0.080px]">
        <span className="mt-[10px] pl-[10px] leading-[20px]">Values</span>
        <div className="mt-[7px] flex h-[35px] items-center rounded-[2px] border border-dashed border-[#c0bebc] bg-white pb-[1px] pl-[12px]">Add data fields here</div>
        <span className="mt-[13px] pl-[10px] leading-[20px] font-medium text-[#3b3a39]">Drill through</span>
        <div className="mt-[12px] flex h-[20px] items-center justify-between pl-[10px]">
          <span className="mb-[2px]">Cross-report</span>
          <span className="flex h-[20px] w-[40px] items-center gap-[2px] rounded-full border border-[#797775] bg-white pl-[5px] text-[11px] text-[#797775]">
            <i className="size-[10px] rounded-full bg-[#605e5c]" />Off
          </span>
        </div>
        <div className="mt-[14px] flex h-[20px] items-center justify-between pl-[10px]">
          <span className="mb-[2px]">Keep all filters</span>
          <span className="flex h-[20px] w-[40px] items-center justify-between rounded-full bg-[#605e5c] pr-[6px] pl-[5px] text-[11px] text-white">
            On<i className="size-[10px] rounded-full bg-white" />
          </span>
        </div>
        <div className="mt-[13px] flex h-[32px] items-center whitespace-nowrap rounded-[2px] border border-dashed border-[#c0bebc] bg-white pb-[1px] pl-[10px] tracking-[0.020px]">Add drill-through fields here</div>
      </div>
    </aside>
  );
}

const fields = ["ANNUAL RAINF...", "APR", "AUG", "DEC", "FEB", "FLOODS", "JAN", "JUL", "JUN", "MAR", "MAY", "NOV", "OCT", "SEP", "SUBDIVISION", "YEAR"];

function DataPane() {
  return (
    <aside className="flex w-[226px] shrink-0 flex-col border-l border-[#dddbd9] bg-[#f3f2f1] text-[#252423]">
      <div className="flex h-[47px] items-center justify-between pr-[10px] pl-[11px] text-[19px] font-semibold tracking-[-0.450px]">
        Data<DoubleChevron />
      </div>
      <div className="mt-[9px] ml-[5px] flex h-[33px] w-[215px] items-center gap-[6px] rounded-[2px] border border-[#605e5c] bg-white pl-[9px] text-[15.500px] tracking-[0px] text-[#605e5c]">
        <SearchGlyph size={20} />Search
      </div>
      <div className="mt-[11px] flex h-[30px] items-center pl-[9px] text-[14.300px] tracking-[-0.100px] text-[#3b3a39]">
        <Icon w={15} h={9}><Line d="M1 1 7.500 7.500 14 1" s="#605e5c" sw={1.300} /></Icon>
        <Icon w={17} h={16} className="ml-[3px]">
          <Box x={1} y={1} w={15} h={14} />
          <Line d="M1 2.500H16" sw={2.500} />
          <Line d="M1 7H16M1 11H16M6 3V15M11 3V15" sw={1.200} />
        </Icon>
        <span className="ml-[7px]">kerala flood</span>
      </div>
      <ul>
        {fields.map((f) => (
          <li key={f} className={`flex h-[30px] items-center pl-[48px] text-[14.500px] whitespace-nowrap text-[#484644] ${f.startsWith("ANNUAL") ? "tracking-[0.020px]" : "tracking-[-0.150px]"}`}>
            <span className="size-[15px] rounded-[2px] border border-[#797775]" />
            <span className="ml-[10px] w-[22px]">
              {f !== "FLOODS" && f !== "SUBDIVISION" && (
                <Icon w={14} h={19}><Line d="M13.500 1H1.500L9 9.500 1.500 18H13.500" s="#484644" sw={1.500} /></Icon>
              )}
            </span>
            {f}
          </li>
        ))}
      </ul>
    </aside>
  );
}

/* ---------- bottom bars ---------- */

function PageTabs() {
  return (
    <div className="flex h-[44px] shrink-0 bg-[#f3f2f1] text-[14.500px] tracking-[-0.100px] text-[#252423]">
      <div className="flex w-[50px] items-center justify-between border-r border-[#a19f9d] pr-[7px] pb-[2px] pl-[6px]">
        <Icon w={7} h={11}><path d="M6.500 0V11L.5 5.500Z" fill="#c8c6c4" /></Icon>
        <Icon w={7} h={11}><path d="M.5 0V11L6.500 5.500Z" fill="#c8c6c4" /></Icon>
      </div>
      <span className="flex w-[95px] items-center justify-center border-r border-[#c8c6c4] pb-[2px]">Page 1</span>
      <span className="flex w-[97px] items-center justify-center border-r border-b-[5px] border-r-[#c8c6c4] border-b-[#117865] bg-white pt-[3px] font-medium">Page 2</span>
      <span className="mt-[2px] flex h-[40px] w-[49px] items-center justify-center bg-[#117865] pr-[1px]">
        <Icon w={14} h={14}><path d="M5 0H9V5H14V9H9V14H5V9H0V5H5Z" fill="#fff" /></Icon>
      </span>
    </div>
  );
}

function StatusBar() {
  return (
    <div className="flex h-[31px] shrink-0 items-center overflow-hidden border-t border-b border-t-[#dddbd9] border-b-[#b3a9a8] bg-[#f3f2f1] text-[14.500px] tracking-[-0.050px] text-[#484644]">
      <span className="-ml-[5px] whitespace-nowrap">Page 2 of 2</span>
      <div className="flex-1" />
      <Icon w={154} h={16}>
        <path d="M0 7.500H6V9.500H0Z" fill="#484644" />
        <path d="M12 7.700H137V8.700H12ZM53 2H58V15H53ZM73.500 4.500H75.500V11.500H73.500Z" fill="#605e5c" />
        <Line d="M143 8.500H153M148 3.500V13.500" s="#484644" sw={1.700} />
      </Icon>
      <span className="ml-[20px] w-[28px] whitespace-nowrap text-[14px] text-[#605e5c]">73%</span>
      <Icon w={22} h={16} className="ml-[24px]">
        <Box x={1} y={1} w={19} h={14} s={MID} />
        <Line d="M4.500 6V4H7.500M14 4H17V6M17 10V12H14M7.500 12H4.500V10" s="#605e5c" sw={1.200} />
      </Icon>
      <span className="ml-[21px] w-[247px] whitespace-nowrap">Update available (click to download)</span>
    </div>
  );
}

const Weather = () => (
  <Icon w={30} h={28}>
    <defs>
      <linearGradient id="sun" x1="0" y1="0" x2="1" y2="1"><stop stopColor="#f6c02c" /><stop offset="1" stopColor="#f0641c" /></linearGradient>
      <linearGradient id="cloud" x1="0" y1="0" x2="0" y2="1"><stop stopColor="#dcebfb" /><stop offset="1" stopColor="#8db4ec" /></linearGradient>
    </defs>
    <circle cx="13" cy="13" r="13" fill="url(#sun)" />
    <path d="M14 22a4 4 0 0 1 0-7 5.500 5.500 0 0 1 10-1.500A4.300 4.300 0 0 1 25 22Z" fill="url(#cloud)" />
  </Icon>
);

const Flower = ({ x, y, r, c, core }) => (
  <g transform={`translate(${x} ${y})`}>
    {[0, 45, 90, 135, 180, 225, 270, 315].map((a) => <ellipse key={a} cx="0" cy={-r * 0.55} rx={r * 0.36} ry={r * 0.5} fill={c} transform={`rotate(${a})`} />)}
    <circle r={r * 0.28} fill={core} />
  </g>
);

const Bouquet = () => (
  <Icon w={64} h={38}>
    <path d="M4 12Q10 14 12 26L5 22ZM2 22Q8 23 12 32L4 30ZM58 9Q50 11 50 21L58 17ZM63 16Q54 17 52 25L61 23Z" fill="#7d9a5e" />
    <path d="M24 22 13 10 18 12 17 4 22 10 25 1 27 9 33 4 31 12 36 10Z" fill="#b4b2bf" />
    <path d="M24 20V6M24 20 18 10M24 20 31 9" stroke="#8f8d9c" strokeWidth=".8" />
    <path d="M37 11 41 20 37 31 33 22ZM46 6 50 13 46 20 43 13Z" fill="#9a78c8" />
    <Flower x={10} y={28} r={8} c="#f0885a" core="#f9b98a" />
    <Flower x={45} y={17} r={7} c="#ef8f3d" core="#a64c1f" />
    <Flower x={46} y={29} r={9} c="#ee6f8a" core="#f7a9b5" />
    <path d="M23 37Q12 32 14 25L19 29 20 22 24 28 29 22 29 29 35 25Q36 33 23 37Z" fill="#f4c52f" />
    <path d="M23 36 20 28M23 36 27 28" stroke="#cf9412" />
    <path d="M34 36Q36 28 41 35ZM54 35Q56 27 61 28L58 35Z" fill="#5f8a4c" />
  </Icon>
);

const taskApps = [
  { n: "copilot", g: <>
    <defs>
      <linearGradient id="cp1" x1="0" y1="0" x2="0" y2="1"><stop stopColor="#1f7ae0" /><stop offset=".6" stopColor="#47c26a" /><stop offset="1" stopColor="#f2d23a" /></linearGradient>
      <linearGradient id="cp2" x1="0" y1="0" x2="0" y2="1"><stop stopColor="#7a5be8" /><stop offset="1" stopColor="#f0709a" /></linearGradient>
    </defs>
    <path d="M7 4Q8 1 12 1H20Q15 3 13 12 11 20 6 20 0 20 1 15Z" fill="url(#cp1)" />
    <path d="M17 1H19Q22 1 23 6L24 9H20Q17 9 15 18 14 22 10 21Q13 18 14 12 15 3 17 1Z" fill="#1b4bb8" />
    <path d="M24 9Q30 9 29 15L27 21H12Q16 18 17 14 18 9 24 9Z" fill="url(#cp2)" />
    <rect x="7" y="19.500" width="23" height="10.500" rx="2.500" fill="#f7c917" />
    <text x="9.500" y="28.300" fontSize="9" fontWeight="700" fill="#222" textLength="18" lengthAdjust="spacingAndGlyphs">PRE</text></> },
  { n: "taskview", g: <><rect x="0" y="9" width="22" height="20" rx="1.500" fill="#2b2b2b" /><rect x="8" y="1" width="22" height="20" rx="1.500" fill="#f4f4f4" /><rect x="8" y="9" width="14" height="12" fill="#b8b6b6" /></> },
  { n: "chat", g: <><path d="M1 30 3 23A14 14 0 1 1 9 28Z" fill="#6264c4" /><path d="M4 6A14 14 0 0 1 27 8L9 28 3 23A14 14 0 0 1 4 6Z" fill="#7d6cb4" opacity=".5" /><rect x="7" y="9.500" width="12" height="12" rx="2" fill="#fff" /><path d="M20 13.500 24 10.500V20.500L20 17.500Z" fill="#fff" /></> },
  { n: "explorer", dot: true, g: <><path d="M0 4Q0 2 2 2H11L14 5H28Q30 5 30 7V14H0Z" fill="#d99a15" /><path d="M0 8H12L15 5.500H28Q30 5.500 30 8V27Q30 29 28 29H2Q0 29 0 27Z" fill="#fdcb45" /><path d="M5 29V24Q5 21.500 8 21.500H22Q25 21.500 25 24V29Z" fill="#1679cf" /><path d="M8 25H22" stroke="#0a4f95" strokeWidth="1.500" /></> },
  { n: "edge", g: <>
    <defs><linearGradient id="edg" x1="0" y1="0" x2="1" y2=".5"><stop stopColor="#1a84d0" /><stop offset=".6" stopColor="#2fc0c4" /><stop offset="1" stopColor="#5fd85a" /></linearGradient></defs>
    <circle cx="15" cy="15" r="14.800" fill="#0f5fb5" />
    <path d="M.3 14A14.800 14.800 0 0 1 29.800 15Q29.500 21 22.500 21 17 21 17.500 18.500 19.500 16 17 13 11 8 4 12 1 14 .3 18Z" fill="url(#edg)" />
    <path d="M11 29Q5 24 8 17 10 12.500 15 12 19 13 18 17 17 24 28 22 23 31 11 29Z" fill="#0b478f" />
    <path d="M18.500 16Q17 24 28.500 20.500L27 23.500Q17 26 15 19Q15 16 18.500 16Z" fill="#eadccd" /></> },
  { n: "store", g: <><path d="M9 6V3Q9 1 11 1H19Q21 1 21 3V6" stroke="#2aaee6" strokeWidth="2" /><path d="M1 6H29V26Q29 30 25 30H5Q1 30 1 26Z" fill="#14579c" /><path d="M1 20 29 12V26Q29 30 25 30H5Q1 30 1 26Z" fill="#123c72" opacity=".6" /><path d="M9.500 12H14.500V17H9.500Z" fill="#f25022" /><path d="M15.500 12H20.500V17H15.500Z" fill="#7fba00" /><path d="M9.500 18H14.500V23H9.500Z" fill="#35a5ee" /><path d="M15.500 18H20.500V23H15.500Z" fill="#ffb900" /></> },
  { n: "myhp", g: <><rect width="30" height="30" rx="1" fill="#0a96d6" /><text x="2.500" y="18.500" fontSize="9.500" fontWeight="600" fill="#fff" textLength="12" lengthAdjust="spacingAndGlyphs">my</text><text x="15" y="19.500" fontSize="14" fontStyle="italic" fontWeight="600" fill="#fff" textLength="13" lengthAdjust="spacingAndGlyphs">hp</text></> },
  { n: "help", g: <><circle cx="14.500" cy="15" r="14.500" fill="#fff" /><circle cx="14" cy="15" r="12.700" fill="#0a93d4" /><text x="8.500" y="24.500" fontSize="25" fontWeight="700" fill="#fff">?</text><circle cx="25" cy="3" r="10" fill="#fcc30b" /></> },
  { n: "mcafee", g: <path d="M1 0 14.500 7 28 0V23L14.500 30 1 23ZM7.500 10V18.500L14.500 22.500 21.500 18.500V10L14.500 14Z" fill="#c0282d" fillRule="evenodd" /> },
  { n: "firefox", g: <>
    <defs><linearGradient id="ffx" x1=".8" y1="0" x2=".3" y2="1"><stop stopColor="#ffe032" /><stop offset=".5" stopColor="#ff8a1e" /><stop offset="1" stopColor="#ee1f62" /></linearGradient></defs>
    <path d="M20 0Q20 4 24 7 29 12 28 18A13.500 12.500 0 0 1 1 17Q1 9 6 3L7 7Q10 6 12 6 16 4 20 0Z" fill="url(#ffx)" />
    <circle cx="14.500" cy="16" r="6.800" fill="#7a45d8" />
    <path d="M5 10Q10 8 14 11 12 14 9 14 7 16 8 19 3 17 5 10Z" fill="#ffb02a" /></> },
  { n: "bing", g: <><rect width="30" height="30" fill="#757575" /><path d="M9.500 5 13.500 7.500V20L10.500 22 9.500 21Z" fill="#2fb4f4" /><path d="M15 11 21 14Q23.500 16 21.500 19L14 24.500 10 22 18 17 16 15.500Z" fill="#3a8df0" /><path d="M10 21.500 13.500 19.500 18.500 20.500 14 24.500Z" fill="#2a5fd8" /></> },
  { n: "powerbi", active: true, g: <><rect x="16" y="0" width="11" height="30" rx="1" fill="#c98410" /><rect x="9.500" y="7" width="11" height="23" rx="1" fill="#e8b41d" /><rect x="4" y="15" width="10" height="15" rx="1" fill="#f6d34e" /></> },
  { n: "terminal", dot: true, g: <><rect x="0" y="4" width="30" height="22" rx="1.500" fill="#333" /><path d="M1 4H11V8H0V5Z" fill="#ccc" /><path d="M11 4H20V8H11Z" fill="#999" /><path d="M20 4H29L30 5V8H20Z" fill="#777" /><path d="M4.500 12 9.500 17 4.500 22" stroke="#ccc" strokeWidth="2.800" /><path d="M13 20.500H23V23H13Z" fill="#fff" /></> },
  { n: "chrome", dot: true, g: <><path d="M15 15 2 7.500A15 15 0 0 1 28 7.500Z" fill="#e33b2e" /><path d="M15 15 28 7.500A15 15 0 0 1 15 30Z" fill="#fcc31e" /><path d="M15 15 15 30A15 15 0 0 1 2 7.500Z" fill="#2a9a4b" /><path d="M8 8H28V12H15Z" fill="#e33b2e" /><circle cx="15" cy="15" r="7.200" fill="#fff" /><circle cx="15" cy="15" r="5.700" fill="#3b7ded" /><circle cx="26" cy="4" r="10" fill="#455a64" /><text x="22.300" y="8.300" fontSize="11" fontWeight="600" fill="#e6eaec">A</text></> },
];

function Taskbar() {
  return (
    <footer className="flex h-[59px] shrink-0 bg-[linear-gradient(90deg,#f3dfe0_0%,#f3dedd_25%,#f3dfda_42%,#eeddce_52%,#ecdccd_64%,#f0dedb_76%,#efdde0_84%,#e8deea_100%)] text-[#1b1a19]">
      <div className="flex w-[407px] items-start pt-[15px] pl-[15px]">
        <Weather />
        <div className="ml-[7px] flex flex-col text-[14.500px] leading-[20px] tracking-[-0.100px]">
          <span className="-mt-[6px]">97°F</span>
          <span className="text-[#5c5557]">Mostly sunny</span>
        </div>
      </div>
      <Icon w={30} h={30} className="mt-[15px]">
        <defs><linearGradient id="win" x1="0" y1="0" x2="1" y2="1"><stop stopColor="#4cc8fb" /><stop offset="1" stopColor="#0067cc" /></linearGradient></defs>
        <path d="M1 2Q1 0 3 0H14.500V14H1ZM15.700 0H28Q30 0 30 2V14H15.700ZM1 15.300H14.500V29H3Q1 29 1 27ZM15.700 15.300H30V27Q30 29 28 29H15.700Z" fill="url(#win)" />
      </Icon>
      <div className="mt-[10px] ml-[17px] flex h-[39px] w-[274px] items-center rounded-full border border-[#dccccc] bg-[#fbf5f4] pr-[5px] pl-[14px] text-[16px] text-[#5c5557]">
        <Icon w={19} h={20}><circle cx="8" cy="8.500" r="7" stroke="#252423" strokeWidth="2" /><path d="M13 14 18 19" stroke="#252423" strokeWidth="2.200" /></Icon>
        <span className="ml-[12px] flex-1 tracking-[0px]">Search</span>
        <Bouquet />
      </div>
      <div className="ml-[3px] flex">
        {taskApps.map((a) => (
          <div key={a.n} className="flex w-[55px] shrink-0 flex-col items-center pt-[5px]">
            <div className={`flex h-[49px] w-[48px] flex-col items-center rounded-[5px] ${a.active ? "border border-[#e8dcd8] bg-[#f8f0ec] pt-[9px]" : "pt-[10px]"}`}>
              <svg width="30" height="30" viewBox="0 0 30 30" fill="none" className="block shrink-0 overflow-visible">{a.g}</svg>
              {a.dot && <i className="mt-[5px] h-[4px] w-[8px] shrink-0 rounded-full bg-[#857c7a]" />}
              {a.active && <i className="mt-[5px] h-[4px] w-[20px] shrink-0 rounded-full bg-[#0f78d4]" />}
            </div>
          </div>
        ))}
      </div>
      <div className="flex flex-1 items-center justify-end pr-[26px] pb-[2px] text-[14.500px] leading-[20px]">
        <Icon w={14} h={9}><Line d="M1 8 7 2 13 8" s="#1b1a19" sw={1.700} /></Icon>
        <Icon w={22} h={18} className="ml-[23px]">
          <path d="M5 14.500Q1 14 1 10.500 1 7.500 4.500 7 6 2.500 10.500 2.500 15 2.500 16 6.500 20.500 7 20.500 10.500 20.500 14.500 17 14.500Z" fill="#c9c3c7" stroke="#1b1a19" strokeWidth="1.400" />
          <path d="M3 1 19 17" stroke="#1b1a19" strokeWidth="1.500" />
        </Icon>
        <div className="ml-[22px] flex w-[30px] flex-col items-center tracking-[-0.100px]"><span>ENG</span><span>IN</span></div>
        <Icon w={20} h={16} className="ml-[22px]">
          <path d="M1 6Q10-3 19 6M3.500 9Q10 2.500 16.500 9M6 12Q10 8 14 12" stroke="#1b1a19" strokeWidth="1.400" />
          <circle cx="10" cy="14" r="1.700" fill="#1b1a19" />
        </Icon>
        <Icon w={20} h={16} className="ml-[10px]">
          <path d="M1 5.500H4L9 1.500V14.500L4 10.500H1ZM12.500 5 19 11.500M19 5 12.500 11.500" stroke="#1b1a19" strokeWidth="1.400" />
        </Icon>
        <Icon w={22} h={18} className="ml-[9px]">
          <rect x="2" y="5" width="17" height="11" rx="2.500" stroke="#1b1a19" strokeWidth="1.500" />
          <path d="M4.500 7.500H17V14H4.500ZM20 8H21.500V13H20Z" fill="#1b1a19" />
          <path d="M4.500 0 1 6H4L3.500 10 8 4H5Z" fill="#1b1a19" stroke="#efe0e6" strokeWidth=".6" />
        </Icon>
        <div className="ml-[12px] flex w-[85px] flex-col items-end whitespace-nowrap"><span>15:16</span><span className="tracking-[0.150px]">12-03-2024</span></div>
        <Icon w={17} h={20} className="ml-[11px]">
          <path d="M8.500 0Q14.500 0 14.500 7V11L16.500 15V16H.5V15L2.500 11V7Q2.500 0 8.500 0ZM6 17H11Q10.500 19.500 8.500 19.500T6 17Z" fill="#0a4aa6" />
        </Icon>
      </div>
    </footer>
  );
}

export default function App() {
  return (
    <div className="flex h-[1032px] w-[1908px] flex-col overflow-hidden bg-[#f3f2f1] font-['Open_Sans','Noto_Sans',sans-serif]">
      <div className="relative z-10"><Ribbon /></div>
      <div className="flex h-[789px] shrink-0">
        <Rail />
        <main className="flex w-[1417px] shrink-0 flex-col">
          <div className="flex h-[44px] shrink-0 items-center pl-[14px] text-[14.500px] tracking-[-0.130px] text-[#323130]">
            <Icon w={20} h={20}>
              <circle cx="10" cy="10" r="9" stroke={INK} strokeWidth="1.200" />
              <path d="M9.300 8.500H10.700V15H9.300ZM9.300 5.500H10.700V7H9.300Z" fill={INK} />
            </Icon>
            <span className="ml-[11px] flex-1">Auto recovery contains some recovered files that haven't been opened.</span>
            <span className="mt-[1px] flex h-[30px] w-[200px] items-center justify-center border border-[#605e5c] bg-white pt-[2px] text-[16.300px] font-medium tracking-[0.050px] text-[#252423]">View recovered files</span>
            <Icon w={16} h={16} className="mt-[4px] mr-[12px] ml-[12px]"><Line d="M1 1 15 15M15 1 1 15" sw={1.300} /></Icon>
          </div>
          <div className="flex min-h-0 flex-1">
            <Report />
            <Filters />
          </div>
          <PageTabs />
        </main>
        <Visualizations />
        <DataPane />
      </div>
      <StatusBar />
      <Taskbar />
    </div>
  );
}
